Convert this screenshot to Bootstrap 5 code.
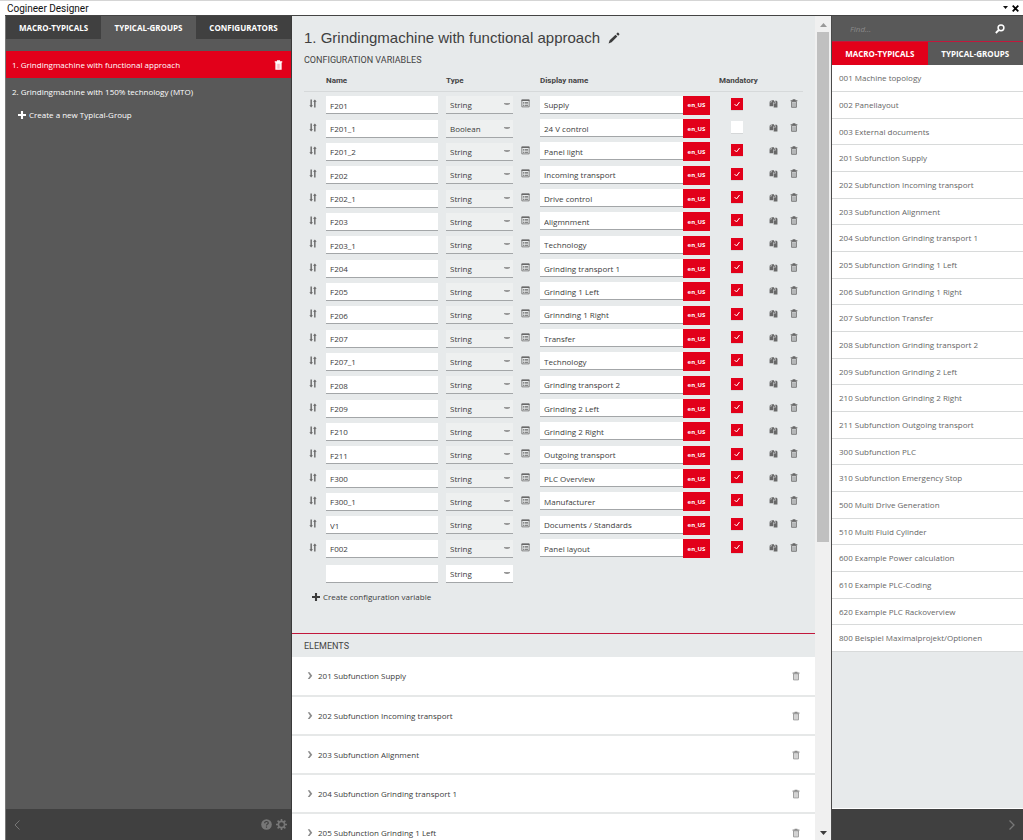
<!DOCTYPE html>
<html lang="en">
<head>
<meta charset="utf-8">
<meta name="viewport" content="width=device-width, initial-scale=1">
<title>Cogineer Designer</title>
<link href="https://cdn.jsdelivr.net/npm/bootstrap@5.3.0/dist/css/bootstrap.min.css" rel="stylesheet">
<style>
:root{--red:#e2001a;--dark:#404040;--grey:#595959;--pale:#e7eaeb}
body{font:8px/12px "Open Sans","Noto Sans",sans-serif;color:#3c3c3c;background:#fff}
button{border:0;background:none;padding:0;color:inherit;line-height:12px}
svg{display:block;fill:currentColor}
.app-title{height:15px;padding:0 4px 0 7px;border-top:1px solid #d5d5d5;font:10px/13px Roboto,sans-serif;color:#111}
.app-body{margin-left:5px;border-top:1px solid #444}
.side-left{width:287px;background:var(--grey);color:#fff;border-right:1px solid #3a3a3a;border-left:1px solid #777}
.tab-strip button{height:23px;font-weight:700;color:#fff;background:var(--dark)}
.tab-strip button.active{background:var(--grey)}
.group-item{height:27px;padding:0 8px 0 6px;color:#fff;text-decoration:none}
.group-item.active{background:var(--red)}
.create{gap:3px}
.foot{height:31px;background:var(--dark);color:#777}
.center-pane{background:var(--pale)}
h1{font:15px/20px "Liberation Sans",Arial,sans-serif;color:#404040}
h2{font:9px/12px Roboto,sans-serif;color:#444}
.variables h2{margin:6px 0 7px}
.vars{table-layout:fixed;border-collapse:collapse}
.vars td,.vars th{padding:0}
.vars th{font:700 8px/12px Roboto,sans-serif;color:#444;height:18px;border-bottom:1px solid #d6d9da;vertical-align:top;padding-top:2px}
.vars th:last-child{padding-left:9px}
.vars tr.gap-row td{height:2px}
.vars td{height:23px;vertical-align:middle}
.vars tbody tr:nth-child(3n+2) td{height:24px}
.vars tr.new-row td{height:27px}
.field{height:18px;min-height:0;font-size:8px;line-height:16px;padding:1px 4px 0;border:0;border-bottom:1px solid #a3a6a8;border-radius:0;background-color:#fff;color:#3c3c3c}
.field.kind{background:#eef0f0 url("data:image/svg+xml,%3Csvg xmlns='http://www.w3.org/2000/svg' viewBox='0 0 6 3'%3E%3Cpath d='M0 0h6v1L4 2H2L0 1z' fill='%23999'/%3E%3C/svg%3E") no-repeat right 3px top 7px/6px 3px}
.new-row .field.kind{background-color:#fff}
.lang{width:27px;height:19px;background:var(--red);color:#fff;font-weight:700;font-size:6px;flex:none}
.flags{padding:0 5px 3px 21px}
.flag-tools{gap:12px}
.tick{width:12px;height:12px;min-height:0;margin:0;border:0;border-radius:0!important;background-color:#fff;display:block;box-shadow:0 1px 0 #d5d7d8}
.tick:checked{background:var(--red) url("data:image/svg+xml,%3Csvg xmlns='http://www.w3.org/2000/svg' viewBox='0 0 12 12'%3E%3Cpath d='M3.500 6l2 2 3-4' fill='none' stroke='%23fff' stroke-width='1'/%3E%3C/svg%3E") center/12px}
.tool{color:#686868}
.soft{color:#8c8c8c}
.elements{margin-top:30px;border-top:1px solid #c2183c}
.elements h2{height:23px;line-height:24px}
.element-row{height:39px;background:#fff;border-bottom:2px solid #e6e8e8;padding:0 15px}
.element-row:first-child{height:40px}
.element-row a{gap:5px}
.bar{width:16px;background:#f0f0f0}
.bar-thumb{flex:0 0 510px;background:#c0c0c0;width:12px}
.side-right{width:192px;border-left:1px solid #4a4a4a;background:var(--pale)}
.search{height:26px;background:var(--grey);color:#fff;border-bottom:1px solid #c2183c;padding:0 18px}
.search input{font-size:8px;line-height:14px;font-style:italic;color:#ddd;background:none;border:0;box-shadow:none;padding:0}
.search input::placeholder{color:#8b8b8b}
.side-right .tab-strip button{height:23px;background:var(--grey)}
.side-right .tab-strip button.active{background:var(--red)}
.macro{height:27px;padding-left:7px;background:#fff;border-bottom:1px solid #d8dada;color:#666;text-decoration:none}
.macro:nth-child(3n){height:26px}
.side-right .foot{border-top:1px solid #fff;height:32px}
</style>
</head>
<body class="vh-100 overflow-hidden d-flex flex-column">
<svg width="0" height="0" class="position-absolute" aria-hidden="true">
<symbol id="trash" viewBox="0 0 14 16"><path d="M4.500 2V.5h5V2H13v2H1V2z"/><path d="M2.700 4.500h8.600v10.300H2.700z" fill="none" stroke="currentColor" stroke-width="1.500"/><path d="M5.300 6v8M8.700 6v8" stroke="currentColor" stroke-width="1.300"/></symbol>
<symbol id="sort" viewBox="0 0 16 16"><path d="M3.500 1h2.500v10H8l-3.300 4L1.500 11h2zM10 15h2.500V5h2l-3.200-4L8 5h2z"/></symbol>
<symbol id="list" viewBox="0 0 16 16"><path d="M1.500 2h13v12h-13z" fill="none" stroke="currentColor" stroke-width="1.400"/><path d="M1 1h14v2.500H1zM3.500 5.500h2v1.300h-2zm3 0h6v1.300h-6zm-3 2.700h2v1.300h-2zm3 0h6v1.300h-6zm-3 2.600h2v1.300h-2zm3 0h6v1.300h-6z"/></symbol>
<symbol id="copy" viewBox="0 0 16 16"><path d="M1 5l3-3h5v11H1z"/><path d="M8 6l3-3h2.500L15 5v10H8z"/><path d="M4.500 2v3.500H1M11.500 4v3.500H8M8 6v9" fill="none" stroke="#e7eaeb" stroke-width=".9"/></symbol>
<symbol id="plus" viewBox="0 0 10 10"><path d="M3.700 0h2.600v3.700H10v2.600H6.300V10H3.700V6.300H0V3.700h3.700z"/></symbol>
<symbol id="pencil" viewBox="0 0 16 16"><path d="M.8 15.200l1.400-4.200 7.800-7.500 2.500 2.500L4.800 13.800zM11 2.500L12.500 1q.7-.5 1.300 0l1.200 1.200q.5.600 0 1.300L13.500 5z"/></symbol>
<symbol id="chev" viewBox="0 0 8 10"><path d="M1 0h2.500L7 4.500 3.500 9H1l3-4.500z"/></symbol>
</svg>

<header class="app-title d-flex align-items-center flex-shrink-0">
  <span class="flex-grow-1">Cogineer Designer</span>
  <button type="button" aria-label="Menu" class="me-1"><svg width="5" height="4" viewBox="0 0 5 4" fill="#555"><path d="M0 0h5L2.500 3z"/></svg></button>
  <button type="button" aria-label="Close"><svg width="7" height="7" viewBox="0 0 7 7"><path d="M.7.7l5.600 5.600M6.300.7L.7 6.300" stroke="#000" stroke-width="1.800"/></svg></button>
</header>

<div class="app-body d-flex flex-grow-1 overflow-hidden">
  <aside class="side-left d-flex flex-column flex-shrink-0">
    <nav class="tab-strip d-flex">
      <button type="button" class="col-4">MACRO-TYPICALS</button><button type="button" class="col-4 active">TYPICAL-GROUPS</button><button type="button" class="col-4">CONFIGURATORS</button>
    </nav>
    <div class="flex-grow-1 pt-2">
      <div class="group-item active d-flex align-items-center mt-1"><a href="#" class="text-white text-decoration-none flex-grow-1 text-nowrap">1. Grindingmachine with functional approach</a><button type="button" aria-label="Delete group"><svg width="9" height="10" viewBox="0 0 14 16"><path d="M4.500 2V.5h5V2H13v2H1V2zM2 4h10v11.500H2z"/><path d="M5 6v8M7 6v8M9 6v8" stroke="#e2001a" stroke-opacity=".45" stroke-width=".9"/></svg></button></div>
      <a href="#" class="group-item d-flex align-items-center">2. Grindingmachine with 150% technology (MTO)</a>
      <button type="button" class="create d-flex align-items-center mt-1 ms-2 ps-1"><svg width="8" height="8"><use href="#plus"/></svg>Create a new Typical-Group</button>
    </div>
    <footer class="foot d-flex align-items-center justify-content-between px-1">
      <button type="button" aria-label="Back" class="ms-1"><svg width="6" height="10" viewBox="0 0 6 10"><path d="M5.500.5L1 5l4.500 4.500" fill="none" stroke="currentColor"/></svg></button>
      <span class="d-flex gap-1">
        <button type="button" aria-label="Help"><svg width="11" height="11" viewBox="0 0 11 11"><circle cx="5.500" cy="5.500" r="5.300"/><path d="M3.700 4.200q0-1.700 1.800-1.700t1.800 1.500q0 .8-1 1.200-.8.300-.8 1.300M5.500 7.500v1.300" fill="none" stroke="#404040" stroke-width="1.200"/></svg></button>
        <button type="button" aria-label="Settings"><svg width="11" height="11" viewBox="0 0 11 11"><circle cx="5.500" cy="5.500" r="3.100" fill="none" stroke="currentColor" stroke-width="1.600"/><path d="M5.500 0v2.200M5.500 8.800V11M0 5.500h2.200M8.800 5.500H11M1.600 1.600l1.600 1.600M7.800 7.800l1.600 1.600M9.400 1.600L7.800 3.200M3.200 7.800L1.600 9.400" stroke="currentColor" stroke-width="1.600"/></svg></button>
      </span>
    </footer>
  </aside>

  <main class="center-pane d-flex flex-column flex-grow-1 overflow-hidden">
    <section class="variables ps-2 ms-1 pe-2 me-1 flex-shrink-0">
      <div class="d-flex align-items-center gap-2 pt-2 mt-1"><h1 class="m-0">1. Grindingmachine with functional approach</h1><button type="button" aria-label="Rename"><svg width="12" height="12" fill="#555"><use href="#pencil"/></svg></button></div>
      <h2>CONFIGURATION VARIABLES</h2>
      <table class="vars w-100">
        <colgroup><col style="width:22px"><col style="width:120px"><col style="width:75px"><col style="width:19px"><col><col style="width:93px"></colgroup>
        <thead><tr><th></th><th>Name</th><th>Type</th><th></th><th>Display name</th><th>Mandatory</th></tr></thead>
        <tbody id="varRows"></tbody>
      </table>
      <button type="button" class="create d-flex align-items-center ms-2 mt-1"><svg width="8" height="8" fill="#444"><use href="#plus"/></svg>Create configuration variable</button>
    </section>
    <section class="elements">
      <h2 class="m-0 ps-2 ms-1">ELEMENTS</h2>
      <div id="elementRows"></div>
    </section>
  </main>
  <div class="bar d-flex flex-column align-items-center flex-shrink-0 pt-1" aria-hidden="true">
    <svg width="7" height="12" viewBox="0 0 7 12" style="fill:#999"><path d="M0 7l3.500-4L7 7z"/></svg>
    <div class="bar-thumb"></div>
    <svg width="7" height="12" viewBox="0 0 7 12" class="mt-auto"><path d="M0 3h7L3.500 7z"/></svg>
  </div>

  <aside class="side-right d-flex flex-column flex-shrink-0">
    <form class="search d-flex align-items-center flex-shrink-0">
      <input type="text" class="form-control" placeholder="Find..." aria-label="Find">
      <button type="button" aria-label="Search"><svg width="10" height="10" viewBox="0 0 10 10"><circle cx="6" cy="3.800" r="2.900" fill="none" stroke="#fff" stroke-width="1.500"/><path d="M3.800 6L.8 9" stroke="#fff" stroke-width="1.800"/></svg></button>
    </form>
    <nav class="tab-strip d-flex flex-shrink-0"><button type="button" class="w-50 active">MACRO-TYPICALS</button><button type="button" class="w-50">TYPICAL-GROUPS</button></nav>
    <div id="macroRows" class="flex-grow-1"></div>
    <footer class="foot d-flex align-items-center justify-content-end pe-2"><button type="button" aria-label="Forward"><svg width="6" height="10" viewBox="0 0 6 10"><path d="M.5.5L5 5 .5 9.500" fill="none" stroke="currentColor" stroke-width="1.300"/></svg></button></footer>
  </aside>
</div>

<script src="https://cdn.jsdelivr.net/npm/bootstrap@5.3.0/dist/js/bootstrap.bundle.min.js"></script>
<script>
const variables = [
  ["F201","Supply"],["F201_1","24 V control"],["F201_2","Panel light"],["F202","Incoming transport"],
  ["F202_1","Drive control"],["F203","Aligmnment"],["F203_1","Technology"],["F204","Grinding transport 1"],
  ["F205","Grinding 1 Left"],["F206","Grinnding 1 Right"],["F207","Transfer"],["F207_1","Technology"],
  ["F208","Grinding transport 2"],["F209","Grinding 2 Left"],["F210","Grinding 2 Right"],["F211","Outgoing transport"],
  ["F300","PLC Overview"],["F300_1","Manufacturer"],["V1","Documents / Standards"],["F002","Panel layout"]];
const macros = ["001 Machine topology","002 Panellayout","003 External documents","201 Subfunction Supply",
  "202 Subfunction Incoming transport","203 Subfunction Alignment","204 Subfunction Grinding transport 1",
  "205 Subfunction Grinding 1 Left","206 Subfunction Grinding 1 Right","207 Subfunction Transfer",
  "208 Subfunction Grinding transport 2","209 Subfunction Grinding 2 Left","210 Subfunction Grinding 2 Right",
  "211 Subfunction Outgoing transport","300 Subfunction PLC","310 Subfunction Emergency Stop",
  "500 Multi Drive Generation","510 Multi Fluid Cylinder","600 Example Power calculation",
  "610 Example PLC-Coding","620 Example PLC Rackoverview","800 Beispiel Maximalprojekt/Optionen"];
const icon = (id, w, h) => `<svg width="${w}" height="${h}"><use href="#${id}"/></svg>`;
const kindSelect = (kind, label) => `<div class="pe-2"><select class="form-select field kind" aria-label="${label}">
  <option${kind === "String" ? " selected" : ""}>String</option><option${kind === "Boolean" ? " selected" : ""}>Boolean</option></select></div>`;

document.getElementById("varRows").innerHTML = `<tr class="gap-row"><td colspan="6"></td></tr>` + variables.map(([name, text]) => {
  const bool = name === "F201_1";
  return `<tr>
    <td><button type="button" class="tool ms-1" aria-label="Move ${name}">${icon("sort", 10, 9)}</button></td>
    <td><div class="pe-2"><input type="text" class="form-control field" aria-label="Name" value="${name}"></div></td>
    <td>${kindSelect(bool ? "Boolean" : "String", "Type of " + name)}</td>
    <td>${bool ? "" : `<button type="button" class="tool" aria-label="Values of ${name}">${icon("list", 9, 9)}</button>`}</td>
    <td><div class="d-flex"><input type="text" class="form-control field" aria-label="Display name" value="${text}"><button type="button" class="lang">en_US</button></div></td>
    <td><div class="flags d-flex align-items-center justify-content-between"><input type="checkbox" class="form-check-input tick" aria-label="Mandatory ${name}"${bool ? "" : " checked"}>
      <span class="flag-tools d-flex"><button type="button" class="tool" aria-label="Copy ${name}">${icon("copy", 9, 9)}</button><button type="button" class="tool" aria-label="Delete ${name}">${icon("trash", 8, 9)}</button></span></div></td>
  </tr>`;
}).join("") + `<tr class="new-row"><td></td><td><div class="pe-2"><input type="text" class="form-control field" aria-label="New name"></div></td><td>${kindSelect("String", "New type")}</td><td></td><td></td><td></td></tr>`;

document.getElementById("elementRows").innerHTML = macros.slice(3, 8).map(t =>
  `<div class="element-row d-flex align-items-center"><a href="#" class="d-flex align-items-center flex-grow-1 text-reset text-decoration-none"><span class="soft">${icon("chev", 6, 8)}</span>${t}</a><button type="button" class="soft" aria-label="Delete ${t}">${icon("trash", 8, 10)}</button></div>`).join("");
document.getElementById("macroRows").innerHTML = macros.map(t =>
  `<a href="#" class="macro d-flex align-items-center">${t}</a>`).join("");
</script>
</body>
</html>
